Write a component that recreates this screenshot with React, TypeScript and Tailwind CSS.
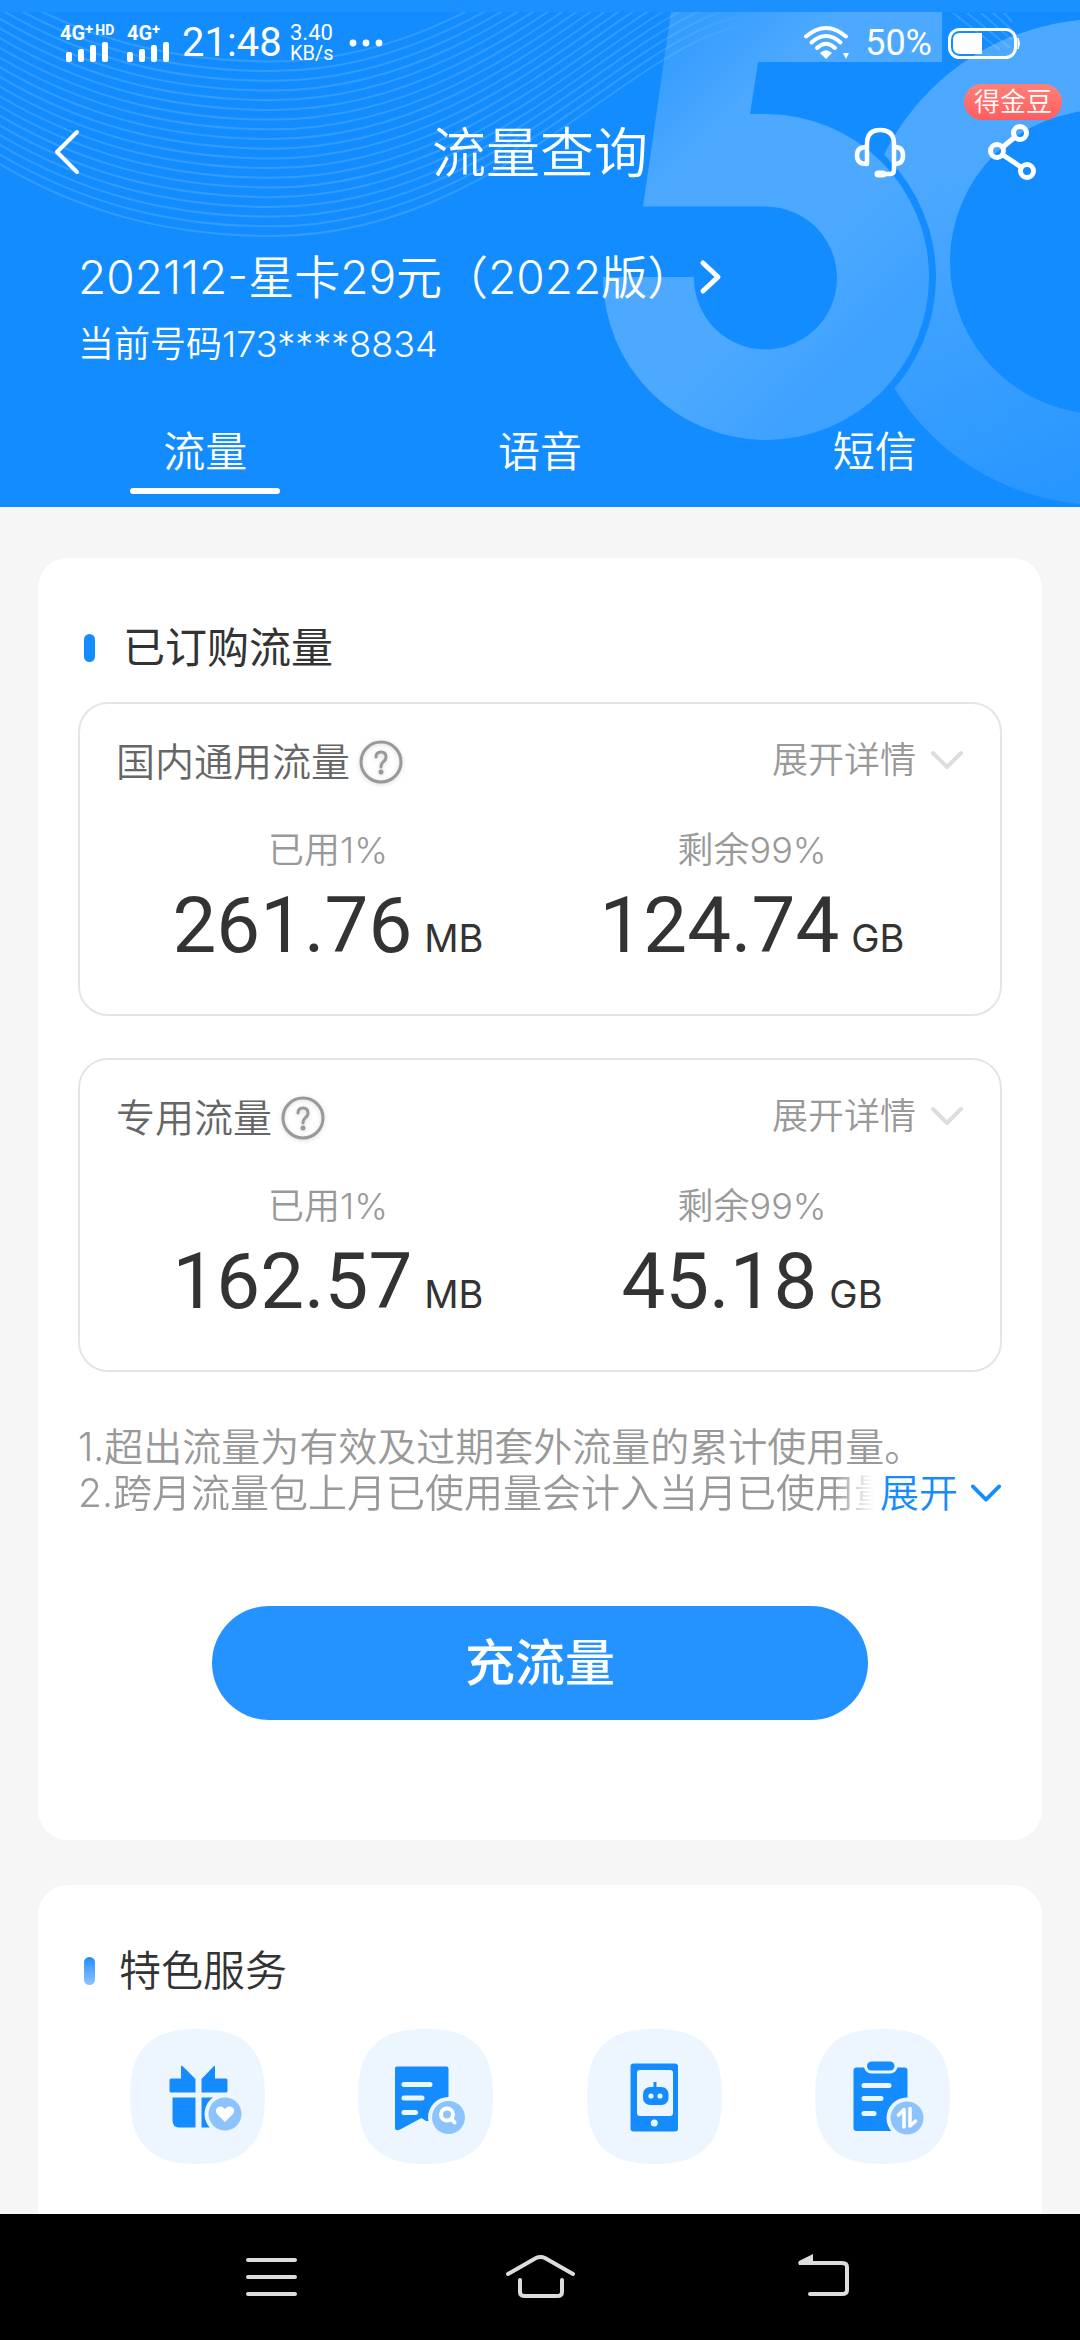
import { useState } from "react";
import type { ReactNode } from "react";

type Usage = {
  id: number;
  title: string;
  used: string;
  usedValue: string;
  usedUnit: string;
  left: string;
  leftValue: string;
  leftUnit: string;
};

const usages: Usage[] = [
  {
    id: 1,
    title: "国内通用流量",
    used: "已用1%",
    usedValue: "261.76",
    usedUnit: "MB",
    left: "剩余99%",
    leftValue: "124.74",
    leftUnit: "GB",
  },
  {
    id: 2,
    title: "专用流量",
    used: "已用1%",
    usedValue: "162.57",
    usedUnit: "MB",
    left: "剩余99%",
    leftValue: "45.18",
    leftUnit: "GB",
  },
];

const tabs = ["流量", "语音", "短信"];

const waves = Array.from({ length: 19 }, (_, i) => i * -9.7);

/* Decorative lines and the big "5G" behind the header */
function HeaderArt() {
  return (
    <svg
      className="absolute right-0 top-0 h-[507px] w-[1080px]"
      viewBox="0 0 1080 507"
      fill="none"
      aria-hidden="true"
    >
      <defs>
        <linearGradient id="five" gradientUnits="userSpaceOnUse" x1="690" y1="30" x2="755" y2="95">
          <stop offset="0" stopColor="#fff" stopOpacity="0.15" />
          <stop offset="1" stopColor="#fff" stopOpacity="0.25" />
        </linearGradient>
        <linearGradient id="fiveEnd" gradientUnits="userSpaceOnUse" x1="760" y1="300" x2="840" y2="380">
          <stop offset="0" stopColor="#128cff" stopOpacity="0" />
          <stop offset="1" stopColor="#128cff" stopOpacity="0.25" />
        </linearGradient>
        <linearGradient id="ring" gradientUnits="userSpaceOnUse" x1="930" y1="180" x2="1060" y2="500">
          <stop offset="0" stopColor="#fff" stopOpacity="0.25" />
          <stop offset="1" stopColor="#fff" stopOpacity="0.09" />
        </linearGradient>
        <linearGradient id="wave" gradientUnits="userSpaceOnUse" x1="0" y1="0" x2="760" y2="0">
          <stop offset="0.85" stopColor="#fff" stopOpacity="0.14" />
          <stop offset="1" stopColor="#fff" stopOpacity="0" />
        </linearGradient>
        <mask id="cut" maskUnits="userSpaceOnUse" x="0" y="0" width="1080" height="507">
          <rect width="1080" height="507" fill="#fff" />
          <circle cx="766" cy="277" r="170" fill="#000" />
        </mask>
        <clipPath id="corner">
          <path d="M944 13H1012V50H944Z" />
        </clipPath>
      </defs>
      <g stroke="url(#wave)" strokeWidth="2">
        {waves.map((y) => (
          <path
            key={y}
            d={`M-20 ${152 + y}C75 ${213 + y} 170 ${236 + y} 272 ${236 + y}C440 ${236 + y} 560 ${125 + y} 655 ${65 + y}C695 ${40 + y} 725 ${24 + y} 780 ${20 + y}`}
          />
        ))}
      </g>
      <rect width="1080" height="12" fill="#1b90ff" />
      <g clipPath="url(#corner)" stroke="#fff" strokeOpacity="0.14" strokeWidth="2">
        <path d="M952 12L1000 50M966 12L1010 48M980 12L1012 40M992 12L1012 30M1003 12L1016 26" />
      </g>
      <path
        d="M671 12H942V62H758L750 114H766A163 163 0 1 1 603 277H694A71.5 71.5 0 1 0 766 206.500H643Z"
        fill="url(#five)"
      />
      <path
        d="M671 12H942V62H758L750 114H766A163 163 0 1 1 603 277H694A71.5 71.5 0 1 0 766 206.500H643Z"
        fill="url(#fiveEnd)"
      />
      <path
        mask="url(#cut)"
        fillRule="evenodd"
        fill="url(#ring)"
        d="M859 262A243 243 0 1 1 1345 262A243 243 0 1 1 859 262ZM950 262A152 152 0 1 0 1254 262A152 152 0 1 0 950 262Z"
      />
    </svg>
  );
}

function SignalBars() {
  return (
    <svg className="h-5 w-[44px]" viewBox="0 0 44 20" fill="#fff" aria-hidden="true">
      <rect x="0" y="10" width="6" height="10" rx="2" />
      <rect x="12" y="7" width="6" height="13" rx="2" />
      <rect x="24" y="3" width="6" height="17" rx="2" />
      <rect x="36" y="0" width="6" height="20" rx="2" />
    </svg>
  );
}

function StatusBar() {
  return (
    <div className="flex h-[84px] items-center justify-between px-[60px] pt-[2px] font-['Roboto',sans-serif] text-white">
      <div className="flex items-center">
        <div className="flex w-[67px] flex-col">
          <span className="flex h-[18px] text-[20px] leading-[18px] font-bold">
            4G<span className="text-[15px] leading-[10px]">+</span>
            <span className="pl-[2px] text-[14px] leading-[12px]">HD</span>
          </span>
          <span className="pl-[6px]">
            <SignalBars />
          </span>
        </div>
        <div className="flex w-[55px] flex-col">
          <span className="flex h-[18px] text-[20px] leading-[18px] font-bold">
            4G<span className="text-[15px] leading-[10px]">+</span>
          </span>
          <SignalBars />
        </div>
        <span className="w-[108px] text-[40px] leading-[48px]">21:48</span>
        <span className="flex w-[58px] flex-col text-[22px] leading-[20px]">
          <span>3.40</span>
          <span className="text-[20px]">KB/s</span>
        </span>
        <svg className="h-2 w-[36px]" viewBox="0 0 36 8" fill="#fff" aria-hidden="true">
          <circle cx="5" cy="4" r="3.4" />
          <circle cx="18" cy="4" r="3.4" />
          <circle cx="31" cy="4" r="3.4" />
        </svg>
      </div>
      <div className="flex items-center">
        <svg className="h-9 w-12" viewBox="0 0 48 36" fill="none" stroke="#fff" strokeWidth="4" strokeLinecap="round" aria-hidden="true">
          <path d="M3 11.500Q23 -5.500 43 11.500" />
          <path d="M8.500 17.500Q23 4.500 37.500 17.500" />
          <path d="M14 23Q23 14.500 32 23" />
          <path d="M17 28Q23 22.500 29 28L23 34Z" fill="#fff" stroke="none" />
          <path d="M40 28h6l-3 6Z" fill="#fff" stroke="none" />
        </svg>
        <span className="pl-[14px] text-[36px] leading-[40px]">50%</span>
        <svg className="ml-4 h-8 w-[72px]" viewBox="0 0 72 32" fill="none" aria-hidden="true">
          <rect x="1.500" y="2.500" width="66" height="28" rx="10" stroke="#fff" strokeWidth="3" />
          <path d="M12 6H34V27H12Q5 27 5 20V13Q5 6 12 6Z" fill="#fff" />
          <path d="M70 11Q73 16.500 70 22Z" fill="#fff" stroke="#fff" />
        </svg>
      </div>
    </div>
  );
}

function TitleBar() {
  return (
    <div className="grid h-[136px] grid-cols-[1fr_auto_1fr] items-center px-[42px] text-white">
      <button type="button" aria-label="返回" className="flex h-16 w-16 items-center pl-[12px]">
        <svg className="h-12 w-7" viewBox="0 0 28 48" fill="none" stroke="#fff" strokeWidth="4" strokeLinecap="round" strokeLinejoin="round">
          <path d="M23 4L3 24L23 44" />
        </svg>
      </button>
      <h1 className="pt-[4px] text-[54px] leading-[64px] font-[350]">流量查询</h1>
      <div className="flex items-center justify-end gap-[78px]">
        <button type="button" aria-label="客服">
          <svg className="h-14 w-14" viewBox="0 0 56 56" fill="none" stroke="#fff" strokeWidth="4.500" strokeLinecap="round" strokeLinejoin="round">
            <path d="M15 40V20Q15 6 28 6Q42 6 42 20V46Q42 50 38 50H27" />
            <path d="M26 50H31" strokeWidth="7" />
            <path d="M14 23Q5 23 5 31.500Q5 40 14 40" />
            <path d="M43 23Q51 23 51 31.500Q51 40 43 40" />
          </svg>
        </button>
        <div className="relative">
          <button type="button" aria-label="分享" className="block">
            <svg className="h-[60px] w-[52px]" viewBox="0 0 52 60" fill="none" stroke="#fff" strokeWidth="5">
              <circle cx="34" cy="11" r="6.500" />
              <circle cx="11" cy="29" r="6.500" />
              <circle cx="41" cy="49" r="6.500" />
              <path d="M17 25L29 15M17 33L35 45" />
            </svg>
          </button>
          <span className="absolute -top-[38px] -right-[24px] rounded-full bg-linear-to-b from-[#ff8078] to-[#ff5c60] px-[10px] text-[26px] leading-[36px] font-[350] whitespace-nowrap">
            得金豆
          </span>
        </div>
      </div>
    </div>
  );
}

function Chevron({ className }: { className: string }) {
  return (
    <svg className={className} viewBox="0 0 34 20" fill="none" stroke="currentColor" strokeWidth="4" strokeLinecap="round" strokeLinejoin="round" aria-hidden="true">
      <path d="M3 3L17 17L31 3" />
    </svg>
  );
}

function Amount({ label, value, unit }: { label: string; value: string; unit: string }) {
  return (
    <div className="flex flex-col items-center">
      <span className="text-[36px] leading-[48px] font-[350] text-[#999]">{label}</span>
      <span className="mt-[14px] flex h-[76px] items-baseline gap-[12px] whitespace-nowrap text-[#333]">
        <span className="font-['Roboto',sans-serif] text-[78px] leading-[76px] font-[450]">{value}</span>
        <span className="text-[38px]">{unit}</span>
      </span>
    </div>
  );
}

function UsageBox({ usage }: { usage: Usage }) {
  return (
    <section className="rounded-[30px] border-2 border-[#e5e5e5] px-[36px] pt-[28px] pb-[50px]">
      <div className="flex h-[60px] items-center justify-between">
        <div className="flex items-center gap-[9px]">
          <h3 className="text-[39px] leading-[48px] font-[350] text-[#666]">{usage.title}</h3>
          <button type="button" aria-label={usage.title + "说明"}>
            <svg className="h-[44px] w-[44px] drop-shadow-sm" viewBox="0 0 44 44" fill="none" stroke="#999" strokeWidth="3">
              <circle cx="22" cy="22" r="20" />
              <path d="M17 17Q17 12 22 12Q27 12 27 17Q27 20 24 22Q22 24 22 27" strokeLinecap="round" />
              <circle cx="22" cy="32" r="2.500" fill="#999" stroke="none" />
            </svg>
          </button>
        </div>
        <button type="button" className="flex items-center gap-[14px] pb-[4px] text-[36px] leading-[48px] font-[350] text-[#999]">
          展开详情
          <Chevron className="h-5 w-[34px] text-[#ddd]" />
        </button>
      </div>
      <div className="mt-[34px] grid grid-cols-2">
        <Amount label={usage.used} value={usage.usedValue} unit={usage.usedUnit} />
        <Amount label={usage.left} value={usage.leftValue} unit={usage.leftUnit} />
      </div>
    </section>
  );
}

function ServiceTile({ label, children }: { label: string; children: ReactNode }) {
  return (
    <a href="#" aria-label={label}>
      <svg className="h-[135px] w-[135px]" viewBox="0 0 135 135" fill="#148cff">
        <path
          d="M67.500 0C90 0 107 4 119 16C131 28 135 45 135 67.500C135 90 131 107 119 119C107 131 90 135 67.500 135C45 135 28 131 16 119C4 107 0 90 0 67.500C0 45 4 28 16 16C28 4 45 0 67.500 0Z"
          fill="#edf6ff"
        />
        {children}
      </svg>
    </a>
  );
}

function Services() {
  return (
    <div className="mt-[28px] flex justify-between px-[52px]">
      <ServiceTile label="礼包">
        <path d="M41 49.500H51V37.500Q51.500 36 53 37.500L65.500 50V63.500H41Q39.500 63.500 39.500 62V51Q39.500 49.500 41 49.500Z" />
        <path d="M71.500 50L83.500 37.500Q85 36 85 37.500V49.500H96Q97.500 49.500 97.500 51V62Q97.500 63.500 96 63.500H71.500Z" />
        <path d="M42.500 68.500H65.500V98.500H49Q42.500 98.500 42.500 91Z" />
        <path d="M71.500 68.500H96V98.500H71.500Z" />
        <circle cx="95" cy="85" r="20.500" fill="#edf6ff" />
        <circle cx="95" cy="85" r="16.500" fill="#8cc3fd" />
        <path d="M95 93L87 85Q84.500 81 87.500 78.500Q91.500 76 95 80Q98.500 76 102.500 78.500Q105.500 81 103 85Z" fill="#fff" />
      </ServiceTile>
      <ServiceTile label="账单查询">
        <path d="M39 37.500H88.500Q90.500 37.500 90.500 39.500V92H68L63.500 89L43 100Q37 103 37 99V39.500Q37 37.500 39 37.500Z" />
        <path d="M46 55.500H72M46 69H64M46 83.500H57.500" stroke="#edf6ff" strokeWidth="5" strokeLinecap="round" />
        <circle cx="90.500" cy="88.500" r="20.500" fill="#edf6ff" />
        <circle cx="90.500" cy="88.500" r="16.500" fill="#8cc3fd" />
        <circle cx="89" cy="85.500" r="6" fill="none" stroke="#fff" strokeWidth="4" />
        <path d="M93.500 90L96.500 93.500" stroke="#fff" strokeWidth="4" strokeLinecap="round" />
      </ServiceTile>
      <ServiceTile label="智能客服">
        <rect x="43.500" y="34.500" width="47.500" height="68" rx="3" />
        <rect x="50" y="41" width="36" height="46" rx="3" fill="#edf6ff" />
        <circle cx="67.300" cy="94" r="3.500" fill="#edf6ff" />
        <rect x="56" y="58" width="25.500" height="18" rx="7" />
        <rect x="66.500" y="53" width="3" height="6" />
        <circle cx="64" cy="67" r="2.600" fill="#edf6ff" />
        <circle cx="73" cy="67" r="2.600" fill="#edf6ff" />
      </ServiceTile>
      <ServiceTile label="业务办理">
        <rect x="38.500" y="38.500" width="54" height="63.500" rx="3" />
        <rect x="49" y="29.500" width="33.500" height="15" rx="7.500" fill="#edf6ff" />
        <rect x="52" y="32.500" width="27.500" height="9" rx="4.500" />
        <path d="M49 56.500H74M49 69.500H66M49 84.500H59" stroke="#edf6ff" strokeWidth="5" strokeLinecap="round" />
        <circle cx="92" cy="89" r="20.500" fill="#edf6ff" />
        <circle cx="92" cy="89" r="16.500" fill="#8cc3fd" />
        <path d="M83.500 86L89 80.500V98M95 79.500V97L100.500 92" fill="none" stroke="#fff" strokeWidth="3.500" strokeLinecap="round" strokeLinejoin="round" />
      </ServiceTile>
    </div>
  );
}

function NavBar() {
  return (
    <nav className="grid h-[126px] shrink-0 grid-cols-3 items-center justify-items-center bg-black px-[135px]">
      <button type="button" aria-label="菜单">
        <svg className="h-[50px] w-[84px]" viewBox="0 0 84 50" fill="none" stroke="#ddd" strokeWidth="4" strokeLinecap="round">
          <path d="M20 8H67M20 25H67M20 42H67" />
        </svg>
      </button>
      <button type="button" aria-label="主页">
        <svg className="h-[50px] w-[84px]" viewBox="0 0 84 50" fill="none" stroke="#ddd" strokeWidth="4" strokeLinecap="round">
          <path d="M10 22L38 6Q42.500 4 47 6L75 22" />
          <path d="M22 28V40Q22 44 27 44H59Q64 44 64 40V28" />
        </svg>
      </button>
      <button type="button" aria-label="后退">
        <svg className="h-[50px] w-[84px]" viewBox="0 0 84 50" fill="none" stroke="#ddd" strokeWidth="4" strokeLinecap="round">
          <path d="M34 11H74Q79 11 79 15V38Q79 42 74 42H42" />
          <path d="M31 13Q29 10 32 8.500L45 2V13Z" fill="#ddd" stroke="none" />
        </svg>
      </button>
    </nav>
  );
}

export default function App() {
  const [active, setActive] = useState(0);

  return (
    <div className="flex min-h-screen flex-col bg-[#f6f6f6] font-['Inter','Noto_Sans_CJK_SC',sans-serif]">
      <header className="relative overflow-hidden bg-[#128cff] text-white">
        <HeaderArt />
        <div className="relative">
          <StatusBar />
          <TitleBar />

          <button type="button" className="mt-[22px] ml-[78px] flex h-[70px] items-center gap-[6px] text-[46px] font-[350]">
            202112-星卡29元（2022版）
            <svg className="h-10 w-6" viewBox="0 0 24 40" fill="none" stroke="#fff" strokeWidth="5" strokeLinecap="round" strokeLinejoin="round" aria-hidden="true">
              <path d="M4 6L19 20L4 34" />
            </svg>
          </button>
          <p className="mt-[8px] pl-[78px] text-[36px] leading-[48px] font-[350]">当前号码173****8834</p>

          <div role="tablist" className="mt-[27px] grid grid-cols-3 px-[38px]">
            {tabs.map((tab, i) => (
              <button
                key={tab}
                type="button"
                role="tab"
                aria-selected={active === i}
                onClick={() => setActive(i)}
                className="relative h-28 text-[42px] font-[350]"
              >
                {tab}
                {active === i && (
                  <span className="absolute bottom-[13px] left-1/2 h-[6px] w-[150px] -translate-x-1/2 rounded-full bg-white" />
                )}
              </button>
            ))}
          </div>
        </div>
      </header>

      <main className="flex flex-1 flex-col gap-[45px] px-[38px] pt-[51px]">
        {/* Purchased data */}
        <section className="rounded-[30px] bg-white px-[40px] pt-[60px] pb-[120px]">
          <div className="mb-[24px] flex h-[60px] items-center gap-[28px] pl-[6px]">
            <span className="h-[28px] w-[11px] rounded-full bg-[#148cff]" />
            <h2 className="text-[42px] leading-[60px] font-normal text-[#333]">已订购流量</h2>
          </div>

          <div className="flex flex-col gap-[42px]">
            {usages.map((usage) => (
              <UsageBox key={usage.id} usage={usage} />
            ))}
          </div>

          <div className="mt-[52px] text-[39px] leading-[46px] font-[350] text-[#999]">
            <p>1.超出流量为有效及过期套外流量的累计使用量。</p>
            <div className="flex gap-[6px]">
              <p className="min-w-0 flex-1 overflow-hidden whitespace-nowrap [mask-image:linear-gradient(to_right,#000_calc(100%_-_40px),transparent)]">
                2.跨月流量包上月已使用量会计入当月已使用量
              </p>
              <button type="button" className="flex shrink-0 items-center gap-[12px] text-[#148cff]">
                展开
                <Chevron className="h-5 w-8" />
              </button>
            </div>
          </div>

          <button
            type="button"
            className="mx-auto mt-[90px] block h-[114px] w-[656px] max-w-full rounded-full bg-[#2492ff] text-[50px] font-medium text-white"
          >
            充流量
          </button>
        </section>

        {/* Featured services */}
        <section className="flex-1 rounded-t-[30px] bg-white px-[40px] pt-[56px] pb-[50px]">
          <div className="flex h-[60px] items-center gap-[24px] pl-[6px]">
            <span className="h-[28px] w-[11px] rounded-full bg-linear-to-b from-[#148cff] to-[#8cc3fd]" />
            <h2 className="text-[42px] leading-[60px] font-[350] text-[#333]">特色服务</h2>
          </div>
          <Services />
        </section>
      </main>

      <NavBar />
    </div>
  );
}
